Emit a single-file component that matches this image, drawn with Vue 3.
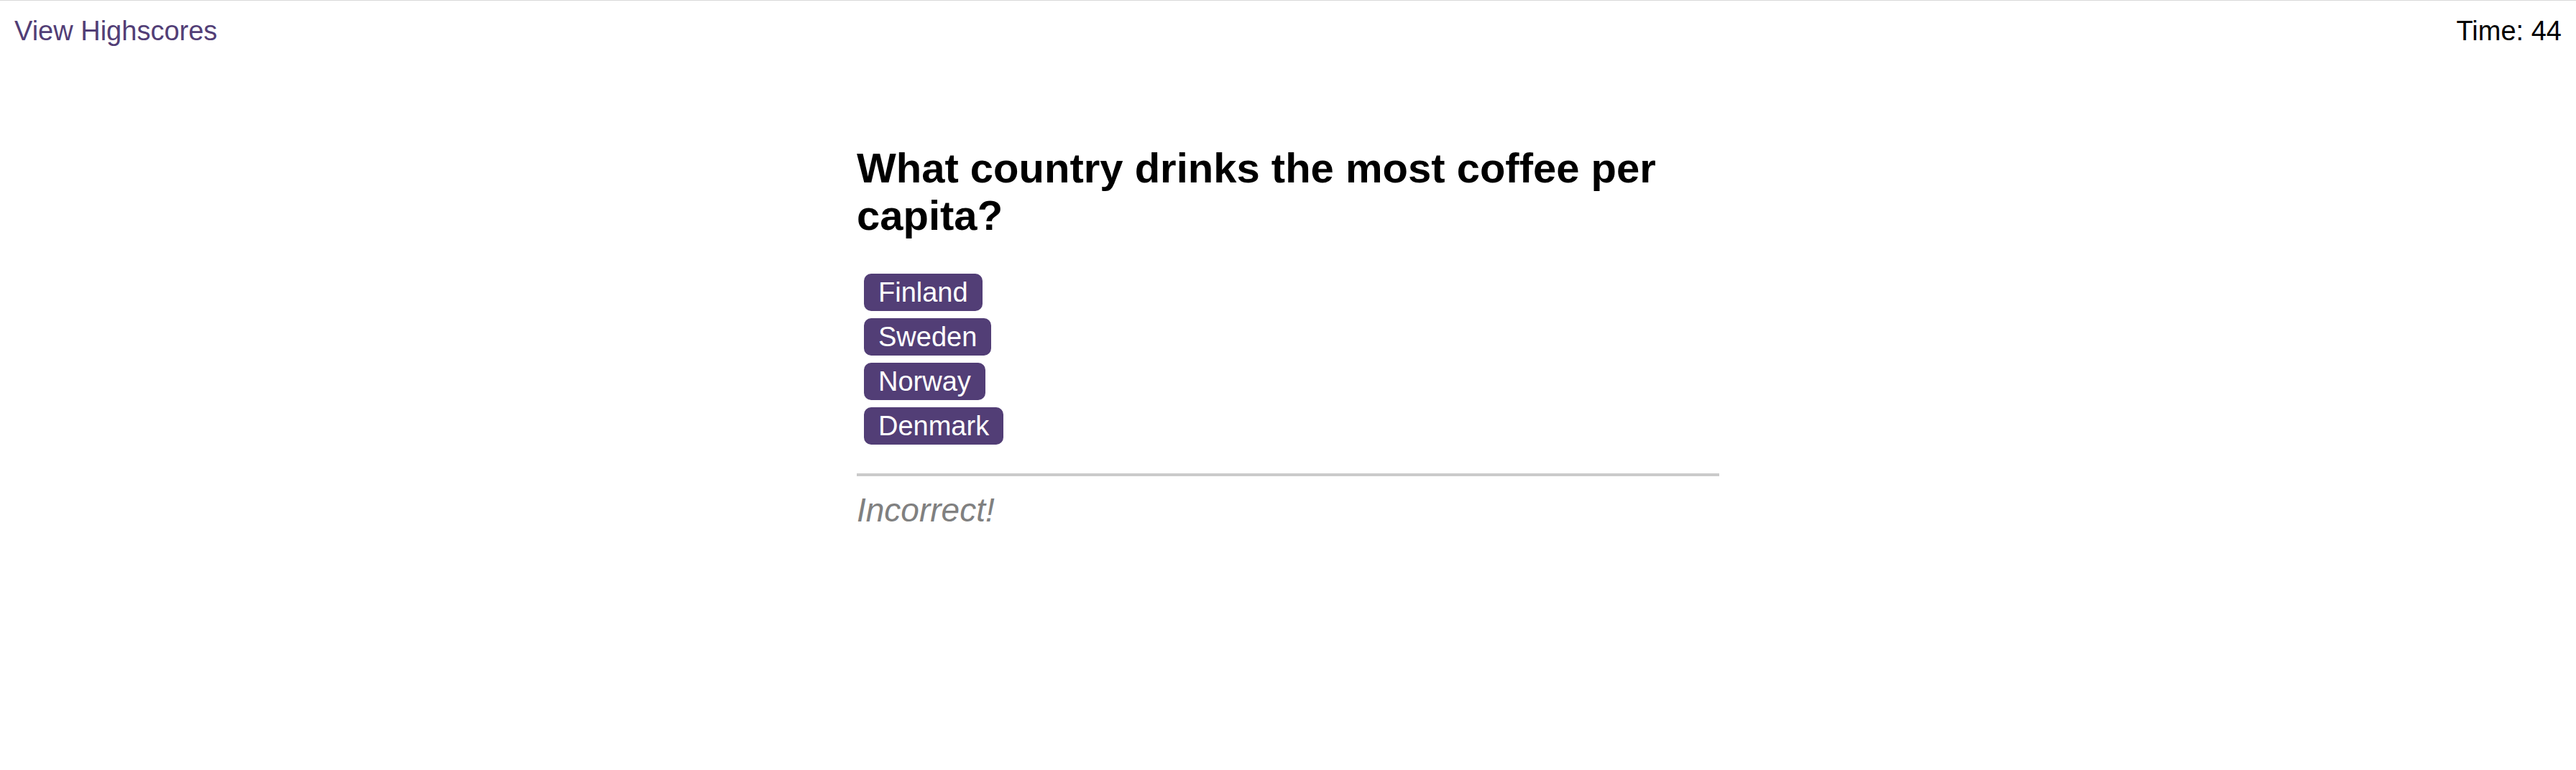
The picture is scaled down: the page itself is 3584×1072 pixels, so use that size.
<script setup>
import { ref } from 'vue'

const time = ref(44)
const question = 'What country drinks the most coffee per capita?'
const choices = ['Finland', 'Sweden', 'Norway', 'Denmark']
const feedback = ref('Incorrect!')
</script>

<template>
  <div class="page">
    <header class="bar">
      <a class="scores" href="#highscores">View Highscores</a>
      <div class="timer">Time: <span>{{ time }}</span></div>
    </header>
    <main class="quiz">
      <h2 class="question">{{ question }}</h2>
      <div class="choices">
        <button v-for="choice in choices" :key="choice" class="choice" type="button">{{ choice }}</button>
      </div>
      <p class="feedback">{{ feedback }}</p>
    </main>
  </div>
</template>

<style>
body {
  background: #fff;
}
</style>

<style scoped>
.page {
  border-top: 1px solid #d8d8d8;
  font-family: Arial, "Liberation Sans", sans-serif;
  font-size: 38px;
  line-height: 44px;
  color: #000;
}
.bar {
  display: flex;
  justify-content: space-between;
  padding: 20px;
}
.scores {
  color: #523e76;
  text-decoration: none;
}
.quiz {
  width: 1200px;
  max-width: 100%;
  margin: 116px auto 0;
}
.question {
  margin: 0 0 48px;
  font-size: 58px;
  line-height: 66px;
}
.choices {
  display: flex;
  flex-direction: column;
  align-items: flex-start;
  gap: 10px;
  padding-left: 10px;
}
.choice {
  border: 0;
  border-radius: 10px;
  padding: 4px 20px;
  background: #523e76;
  color: #fff;
  font: inherit;
}
.feedback {
  margin: 40px 0 0;
  padding-top: 20px;
  border-top: 4px solid #cacaca;
  color: gray;
  font-size: 46px;
  font-style: italic;
  line-height: 54px;
}
</style>
